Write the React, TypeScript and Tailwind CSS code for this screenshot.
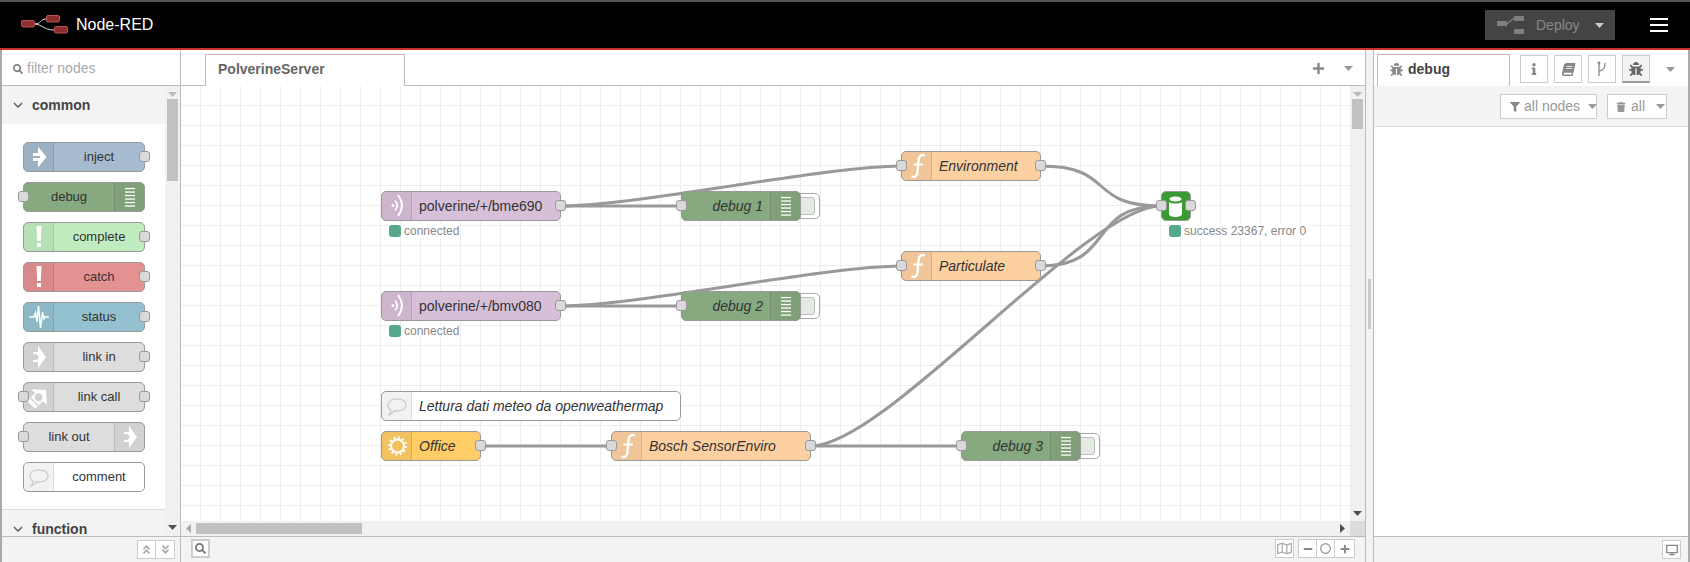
import React from "react";
import { FaBug, FaInfo, FaBook, FaFilter, FaTrash, FaSearch, FaPlus, FaMinus, FaRegCircle, FaRegMap, FaDesktop, FaAngleDoubleUp, FaAngleDoubleDown } from "react-icons/fa";

const Caret = ({ className = "" }: { className?: string }) => (
  <svg width="9" height="5" viewBox="0 0 9 5" className={`shrink-0 ${className}`}><polygon points="0,0 9,0 4.5,5" fill="currentColor" /></svg>
);
const Chevron = () => (
  <svg width="10" height="6" viewBox="0 0 10 6" className="text-[#555]"><path d="M1 1 L5 5 L9 1" fill="none" stroke="currentColor" strokeWidth="1.3" /></svg>
);

const IconSvg = ({ children }: { children: React.ReactNode }) => (
  <svg width="30" height="30" viewBox="0 0 30 30" className="block">{children}</svg>
);
const InjectIcon = () => (
  <IconSvg>
    <path fillRule="evenodd" d="M9 11 H14 V4.500 L22.500 15 L14 25.500 V19 H9 Z M9 14 H16 V16 H9 Z" fill="#fff" />
  </IconSvg>
);
const DebugIcon = () => (
  <IconSvg>
    {[6.5, 10, 13.5, 17, 20.5, 24].map((y) => (
      <rect key={y} x="10" y={y - 0.6} width="10" height="1.3" fill="#fff" />
    ))}
  </IconSvg>
);
const AlertIcon = () => (
  <IconSvg>
    <polygon points="12.500,4 17.500,4 16.800,19 13.200,19" fill="#fff" />
    <rect x="13" y="21" width="4" height="4" fill="#fff" />
  </IconSvg>
);
const StatusIcon = () => (
  <IconSvg>
    <polyline points="5,15 10,15 11.500,11 13,20 14.500,4 16.500,26 18.500,10 20,17 21,15 25,15" fill="none" stroke="#fff" strokeWidth="1.500" />
  </IconSvg>
);
const LinkIcon = () => (
  <IconSvg>
    <path fillRule="evenodd" d="M9 10 H14 V4 L22 15 L14 26 V20 H9 V18 H12.500 L15 15 L12.500 12 H9 Z" fill="#fff" />
  </IconSvg>
);
const LinkCallIcon = () => (
  <IconSvg>
    <g transform="rotate(-45 15 15)">
      <path fillRule="evenodd" d="M4 9.500 H15 V4 L25 15 L15 26 V20.500 H4 Z M14.500 11 a4 4 0 1 0 0.010 0 Z M7.500 9 H9 V21 H7.500 Z" fill="#fff" />
    </g>
  </IconSvg>
);
const CommentIcon = () => (
  <IconSvg>
    <path d="M15 8 C21 8 24 10.500 24 14 C24 17.500 20 20 15 20 C14 20 13 20 12 19.800 C11 22 9.500 23.500 7 24 C8.200 22.500 9 20.500 9 19 C7 18 6 16 6 14 C6 10.500 9.500 8 15 8 Z" fill="none" stroke="#cfcfcf" strokeWidth="1.400" />
  </IconSvg>
);
const MqttIcon = () => (
  <IconSvg>
    <circle cx="11" cy="14.500" r="1.500" fill="#fff" />
    <path d="M13 9.500 Q17.500 14.500 13 19.500" fill="none" stroke="#fff" strokeWidth="1.600" />
    <path d="M16 4 Q24 14.500 16 25" fill="none" stroke="#fff" strokeWidth="1.800" />
  </IconSvg>
);
const FunctionIcon = () => (
  <IconSvg>
    <path d="M23 4.500 C19 3 17 5 16.600 9 L15.500 21 C15 25.500 13 27 9.500 25.500" fill="none" stroke="#fff" strokeWidth="2.400" />
    <path d="M11.500 13.500 H21" stroke="#fff" strokeWidth="2" />
  </IconSvg>
);
const SunIcon = () => (
  <IconSvg>
    <circle cx="15.500" cy="15" r="6.500" fill="none" stroke="#fff" strokeWidth="2" />
    <circle cx="15.500" cy="15" r="8.500" fill="none" stroke="#fff" strokeWidth="2" strokeDasharray="2 2.450" />
  </IconSvg>
);
const DbIcon = () => (
  <IconSvg>
    <ellipse cx="14.500" cy="8" rx="6" ry="2.500" fill="#fff" />
    <path d="M8 11 C10 13 19 13 21 11 V23 C21 27 8 27 8 23 Z" fill="#fff" />
  </IconSvg>
);

const Port = ({ side }: { side: "left" | "right" }) => (
  <div className={`absolute top-[8px] h-[11px] w-[11px] rounded-[3px] border border-[#999] bg-[#d9d9d9] ${side === "left" ? "left-[-6px]" : "right-[-6px]"}`} />
);

const IconCell = ({ side = "left", children }: { side?: "left" | "right"; children: React.ReactNode }) => (
  <div className={`h-full w-[30px] shrink-0 bg-black/5 ${side === "left" ? "border-r rounded-l-[4px]" : "border-l rounded-r-[4px]"} border-black/10`}>
    <div className="-mt-px">{children}</div>
  </div>
);

const PaletteNode = ({ label, color, icon, right, inPort, outPort }: { label: string; color: string; icon: React.ReactNode; right?: boolean; inPort?: boolean; outPort?: boolean }) => (
  <div className={`relative flex h-[30px] w-[122px] shrink-0 rounded-[5px] border border-[#999] ${color}`}>
    {!right && <IconCell>{icon}</IconCell>}
    <div className="flex-1 text-center text-[13px] leading-[28px] text-[#333]">{label}</div>
    {right && <IconCell side="right">{icon}</IconCell>}
    {inPort && <Port side="left" />}
    {outPort && <Port side="right" />}
  </div>
);

const Status = ({ text }: { text: string }) => (
  <div className="absolute left-[7px] top-[32px] flex items-center whitespace-nowrap">
    <div className="h-[12px] w-[12px] rounded-[3px] bg-[#55a88c]" />
    <div className="ml-[3px] h-[14px] bg-white text-[12px] leading-[14px] text-[#888]">{text}</div>
  </div>
);

const CanvasNode = ({ className, color, label, icon, italic = true, inPort, outPort, status }: { className: string; color: string; label: string; icon: React.ReactNode; italic?: boolean; inPort?: boolean; outPort?: boolean; status?: string }) => (
  <div className={`absolute flex h-[30px] rounded-[5px] border border-[#999] ${color} ${className}`}>
    <IconCell>{icon}</IconCell>
    <div className={`pl-[7px] text-[14px] leading-[28px] whitespace-nowrap text-[#333] ${italic ? "italic" : ""}`}>{label}</div>
    {inPort && <Port side="left" />}
    {outPort && <Port side="right" />}
    {status && <Status text={status} />}
  </div>
);

const DebugNode = ({ className, label }: { className: string; label: string }) => (
  <div className={`absolute h-[30px] w-[120px] ${className}`}>
    <div className="absolute left-[112px] top-[2px] h-[26px] w-[27px] rounded-r-[5px] border border-[#aaa] bg-white">
      <div className="absolute left-[6px] top-[3px] h-[18px] w-[15px] rounded-r-[3px] border border-[#bbb] bg-[#e4ebe2]" />
    </div>
    <div className="absolute inset-0 flex rounded-[5px] border border-[#999] bg-[#87a980]">
      <div className="flex-1 pr-[7px] text-right text-[14px] italic leading-[28px] text-[#333]">{label}</div>
      <IconCell side="right"><DebugIcon /></IconCell>
      <Port side="left" />
    </div>
  </div>
);

const ToolButton = ({ className = "", children }: { className?: string; children: React.ReactNode }) => (
  <div className={`flex h-[19px] w-[19px] items-center justify-center border border-[#ccc] bg-white text-[#888] ${className}`}>{children}</div>
);

const wires = [
  "M561 206 L681 206",
  "M561 206 C636 206 826 166 901 166",
  "M561 306 L681 306",
  "M561 306 C636 306 826 266 901 266",
  "M1041 166 C1116 166 1086 206 1161 206",
  "M1041 266 C1116 266 1086 206 1161 206",
  "M811 446 C886 446 1086 206 1161 206",
  "M811 446 L961 446",
  "M481 446 L611 446",
];

export default function App() {
  return (
    <div className="flex h-[562px] w-[1690px] flex-col overflow-hidden bg-white text-[#333] [font-family:'Liberation_Sans',Arial,sans-serif]">
      <header className="flex h-[50px] shrink-0 items-center border-t-2 border-b-2 border-t-[#555] border-b-[#c9302f] bg-black">
        <svg width="50" height="20" viewBox="0 0 50 20" className="ml-[20px] mt-[-1px]">
          <path d="M15 9 C21 9 20 4 26 4 M15 9 C21 9 24 15 34 15" fill="none" stroke="#ddd" strokeWidth="1" />
          <rect x="1.500" y="5.500" width="13" height="6.500" rx="1.500" fill="#8f2d2d" stroke="#b55" />
          <rect x="26.500" y="0.500" width="13" height="6.500" rx="1.500" fill="#8f2d2d" stroke="#b55" />
          <rect x="34.500" y="11.500" width="13" height="6.500" rx="1.500" fill="#8f2d2d" stroke="#b55" />
        </svg>
        <span className="ml-[6px] text-[16px] text-white">Node-RED</span>
        <div className="ml-auto flex h-[30px] w-[130px] items-center bg-[#444]">
          <svg width="28" height="19" viewBox="0 0 28 19" className="ml-[12px]" fill="#7f7f7f">
            <rect x="0" y="5" width="10" height="5" />
            <path d="M10 8 L17 2" stroke="#7f7f7f" strokeWidth="1.500" />
            <rect x="17" y="0" width="10" height="5" />
            <rect x="17" y="13" width="10" height="5" />
          </svg>
          <span className="ml-[11px] text-[14px] text-[#888]">Deploy</span>
          <Caret className="ml-[15px] text-[#ccc]" />
        </div>
        <div className="ml-[35px] mr-[22px] flex w-[18px] flex-col gap-[4px]">
          <div className="h-[2px] bg-white" />
          <div className="h-[2px] bg-white" />
          <div className="h-[2px] bg-white" />
        </div>
      </header>

      <main className="flex min-h-0 flex-1 border-x-2 border-x-[#aaa]">
        {/* Palette */}
        <aside className="flex w-[179px] shrink-0 flex-col border-r border-[#bbb]">
          <div className="flex h-[36px] shrink-0 items-center border-b border-[#bbb] pl-[11px] pt-[2px]">
            <FaSearch className="text-[10px] text-[#777]" />
            <span className="ml-[4px] text-[14px] text-[#aaa]">filter nodes</span>
          </div>
          <div className="flex min-h-0 flex-1">
            <div className="w-[163px] shrink-0 overflow-hidden">
              <div className="flex h-[38px] items-center gap-[9px] bg-[#f3f3f3] pl-[11px]">
                <Chevron />
                <span className="text-[14px] font-bold text-[#444]">common</span>
              </div>
              <div className="flex h-[386px] flex-col gap-[10px] border-b border-[#ddd] pl-[21px] pt-[18px]">
                <PaletteNode label="inject" color="bg-[#a6bbcf]" icon={<InjectIcon />} outPort />
                <PaletteNode label="debug" color="bg-[#87a980]" icon={<DebugIcon />} right inPort />
                <PaletteNode label="complete" color="bg-[#c0edc0]" icon={<AlertIcon />} outPort />
                <PaletteNode label="catch" color="bg-[#e49191]" icon={<AlertIcon />} outPort />
                <PaletteNode label="status" color="bg-[#94c1d0]" icon={<StatusIcon />} outPort />
                <PaletteNode label="link in" color="bg-[#dddddd]" icon={<LinkIcon />} outPort />
                <PaletteNode label="link call" color="bg-[#dddddd]" icon={<LinkCallIcon />} inPort outPort />
                <PaletteNode label="link out" color="bg-[#dddddd]" icon={<LinkIcon />} right inPort />
                <PaletteNode label="comment" color="bg-white" icon={<CommentIcon />} />
              </div>
              <div className="flex h-[38px] items-center gap-[9px] bg-[#f3f3f3] pl-[11px]">
                <Chevron />
                <span className="text-[14px] font-bold text-[#444]">function</span>
              </div>
            </div>
            <div className="flex w-[15px] flex-col items-center bg-[#f1f1f1] pt-[6px]">
              <Caret className="text-[#bbb]" />
              <div className="mt-[2px] h-[82px] w-[11px] bg-[#c1c1c1]" />
              <Caret className="mt-auto mb-[6px] text-[#505050]" />
            </div>
          </div>
          <div className="flex h-[26px] shrink-0 justify-end border-t border-[#bbb] bg-[#f3f3f3] pr-[5px] pt-[3px]">
            <ToolButton className="w-[19px]"><FaAngleDoubleUp className="text-[11px] text-[#aaa]" /></ToolButton>
            <ToolButton className="ml-[-1px] w-[20px]"><FaAngleDoubleDown className="text-[11px] text-[#aaa]" /></ToolButton>
          </div>
        </aside>

        {/* Workspace */}
        <section className="flex w-[1184px] shrink-0 flex-col">
          <div className="flex h-[36px] shrink-0 items-end border-b border-[#bbb] pl-[24px]">
            <div className="mb-[-1px] flex h-[32px] w-[200px] items-center border-x border-t border-[#bbb] bg-white pb-[2px] pl-[12px] text-[14px] font-bold text-[#666]">PolverineServer</div>
            <div className="ml-auto flex h-[32px] items-center gap-[19px] pb-[2px] pr-[12px]">
              <FaPlus className="text-[13px] text-[#888]" />
              <Caret className="text-[#999]" />
            </div>
          </div>
          <div className="flex min-h-0 flex-1">
            <div className="relative w-[1169px] overflow-hidden bg-white bg-[linear-gradient(to_right,transparent_19px,#eeeeee_19px),linear-gradient(to_bottom,transparent_19px,#eeeeee_19px)] bg-[length:20px_20px]">
              <svg width="1169" height="435" viewBox="181 86 1169 435" className="absolute inset-0">
                {wires.map((d) => (
                  <path key={d} d={d} fill="none" stroke="#999" strokeWidth="3" />
                ))}
              </svg>
              <CanvasNode className="left-[200px] top-[105px] w-[180px]" color="bg-[#d8bfd8]" label="polverine/+/bme690" icon={<MqttIcon />} italic={false} outPort status="connected" />
              <CanvasNode className="left-[200px] top-[205px] w-[180px]" color="bg-[#d8bfd8]" label="polverine/+/bmv080" icon={<MqttIcon />} italic={false} outPort status="connected" />
              <DebugNode className="left-[500px] top-[105px]" label="debug 1" />
              <DebugNode className="left-[500px] top-[205px]" label="debug 2" />
              <DebugNode className="left-[780px] top-[345px]" label="debug 3" />
              <CanvasNode className="left-[720px] top-[65px] w-[140px]" color="bg-[#fdd0a2]" label="Environment" icon={<FunctionIcon />} inPort outPort />
              <CanvasNode className="left-[720px] top-[165px] w-[140px]" color="bg-[#fdd0a2]" label="Particulate" icon={<FunctionIcon />} inPort outPort />
              <div className="absolute left-[980px] top-[105px] h-[30px] w-[30px] rounded-[5px] border border-[#999] bg-[#3a9b34]">
                <div className="-mt-px -ml-px"><DbIcon /></div>
                <Port side="left" />
                <Port side="right" />
                <Status text="success 23367, error 0" />
              </div>
              <CanvasNode className="left-[200px] top-[305px] w-[300px]" color="bg-white" label="Lettura dati meteo da openweathermap" icon={<CommentIcon />} />
              <CanvasNode className="left-[200px] top-[345px] w-[100px]" color="bg-[#ffcc66]" label="Office" icon={<SunIcon />} outPort />
              <CanvasNode className="left-[430px] top-[345px] w-[200px]" color="bg-[#fdd0a2]" label="Bosch SensorEnviro" icon={<FunctionIcon />} inPort outPort />
            </div>
            <div className="flex w-[15px] flex-col items-center bg-[#f1f1f1] pt-[6px]">
              <Caret className="text-[#bbb]" />
              <div className="mt-[2px] h-[30px] w-[11px] bg-[#c1c1c1]" />
              <Caret className="mt-auto mb-[5px] text-[#505050]" />
            </div>
          </div>
          <div className="flex h-[15px] shrink-0 bg-[#f1f1f1]">
            <div className="flex w-[1169px] items-center pl-[5px]">
              <svg width="5" height="9" viewBox="0 0 5 9" className="text-[#aaa]"><polygon points="5,0 5,9 0,4.500" fill="currentColor" /></svg>
              <div className="ml-[5px] h-[11px] w-[166px] bg-[#c1c1c1]" />
              <svg width="5" height="9" viewBox="0 0 5 9" className="ml-auto mr-[5px] text-[#505050]"><polygon points="0,0 0,9 5,4.500" fill="currentColor" /></svg>
            </div>
            <div className="w-[15px] bg-[#dcdcdc]" />
          </div>
          <div className="flex h-[26px] shrink-0 items-start border-t border-[#bbb] bg-[#f3f3f3] pl-[10px] pr-[10px] pt-[2px]">
            <ToolButton className="border-2"><FaSearch className="text-[11px] text-[#777]" /></ToolButton>
            <ToolButton className="ml-auto"><FaRegMap className="text-[15px] text-[#aaa]" /></ToolButton>
            <ToolButton className="ml-[4px]"><FaMinus className="text-[10px] text-[#888]" /></ToolButton>
            <ToolButton className="ml-[-1px]"><FaRegCircle className="text-[11px] text-[#888]" /></ToolButton>
            <ToolButton className="ml-[-1px] w-[21px]"><FaPlus className="text-[10px] text-[#888]" /></ToolButton>
          </div>
        </section>

        {/* Separator */}
        <div className="flex w-[9px] shrink-0 items-start justify-center border-x border-[#bbb] bg-[#f3f3f3] pt-[229px]">
          <div className="h-[50px] w-[3px] bg-[#ccc]" />
        </div>

        {/* Sidebar */}
        <aside className="flex min-w-0 flex-1 flex-col">
          <div className="flex h-[36px] shrink-0 items-end pl-[3px]">
            <div className="flex h-[32px] w-[133px] items-center border-x border-t border-[#bbb] bg-white pb-[2px] pl-[12px]">
              <FaBug className="text-[13px] text-[#888]" />
              <span className="ml-[5px] text-[14px] font-bold text-[#444]">debug</span>
            </div>
            <div className="mb-[3px] ml-[10px] flex h-[28px] gap-[6px]">
              <div className="flex w-[28px] items-center justify-center border border-[#ccc] bg-white"><FaInfo className="text-[12px] text-[#888]" /></div>
              <div className="flex w-[28px] items-center justify-center border border-[#ccc] bg-white"><FaBook className="-skew-x-12 text-[13px] text-[#888]" /></div>
              <div className="flex w-[28px] items-center justify-center border border-[#ccc] bg-white">
                <svg width="12" height="16" viewBox="0 0 12 16" fill="none" stroke="#888" strokeWidth="1.300">
                  <path d="M3 1 V15 M3 10 C8 10 9 7 9 2" />
                  <circle cx="3" cy="2" r="0.800" />
                </svg>
              </div>
              <div className="flex w-[28px] items-center justify-center border border-b-2 border-[#ccc] border-b-[#999] bg-[#f3f3f3]"><FaBug className="text-[14px] text-[#666]" /></div>
            </div>
            <Caret className="mb-[14px] ml-[16px] text-[#999]" />
          </div>
          <div className="flex h-[41px] shrink-0 items-start justify-end gap-[10px] border-b border-[#ddd] bg-[#f3f3f3] pr-[21px] pt-[8px]">
            <div className="flex h-[25px] w-[97px] items-center whitespace-nowrap border border-[#ccc] bg-white pl-[9px] text-[14px] text-[#999]">
              <FaFilter className="shrink-0 text-[10px] text-[#888]" />
              <span className="ml-[4px]">all nodes</span>
              <Caret className="ml-[8px] text-[#999]" />
            </div>
            <div className="flex h-[25px] w-[60px] items-center whitespace-nowrap border border-[#ccc] bg-white pl-[8px] text-[14px] text-[#999]">
              <FaTrash className="shrink-0 text-[10px] text-[#999]" />
              <span className="ml-[5px]">all</span>
              <Caret className="ml-[11px] text-[#999]" />
            </div>
          </div>
          <div className="min-h-0 flex-1 bg-white" />
          <div className="flex h-[26px] shrink-0 items-start justify-end border-t border-[#bbb] bg-[#f3f3f3] pr-[7px] pt-[3px]">
            <ToolButton><FaDesktop className="text-[12px] text-[#888]" /></ToolButton>
          </div>
        </aside>
      </main>
    </div>
  );
}
